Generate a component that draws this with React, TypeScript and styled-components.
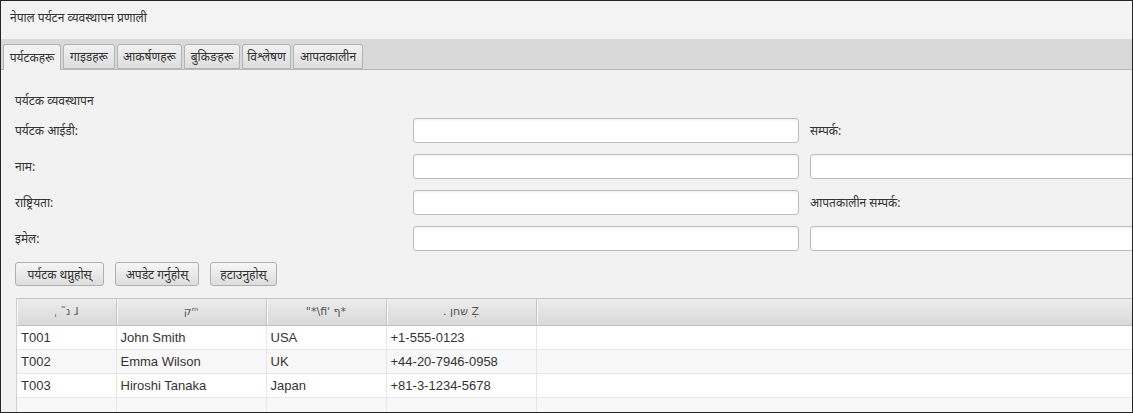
import React from "react";
import styled, { createGlobalStyle } from "styled-components";

const GlobalStyle = createGlobalStyle`
  html, body {
    margin: 0;
    padding: 0;
    background: #ffffff;
  }
  body {
    font-family: "Noto Sans", "DejaVu Sans", sans-serif;
  }
  * { box-sizing: border-box; }
`;

const Frame = styled.div`
  width: 1133px;
  height: 413px;
  border: 1px solid #262626;
  background: #f2f2f2;
  overflow: hidden;
  display: flex;
  flex-direction: column;
  color: #333333;
  font-size: 12px;
`;

const TitleBar = styled.div`
  height: 38px;
  flex: none;
  padding: 8px 0 0 9px;
  background: #f3f3f3;
  font-size: 12px;
  color: #333;
`;

const TabStrip = styled.div`
  height: 31px;
  flex: none;
  display: flex;
  align-items: flex-end;
  gap: 2px;
  padding-left: 2px;
  background: #d9d9d9;
  border-bottom: 1px solid #b9b9b9;
`;

const Tab = styled.div<{ $w: number; $active?: boolean }>`
  width: ${(p) => p.$w}px;
  height: ${(p) => (p.$active ? 26 : 25)}px;
  margin-bottom: ${(p) => (p.$active ? -1 : 0)}px;
  display: flex;
  align-items: center;
  justify-content: center;
  font-size: 12px;
  color: #333;
  border: 1px solid #b3b3b3;
  border-bottom: ${(p) => (p.$active ? "none" : "1px solid #b3b3b3")};
  border-radius: 3px 3px 0 0;
  background: ${(p) =>
    p.$active ? "#f2f2f2" : "linear-gradient(#f1f1f1, #dedede)"};
`;

const Content = styled.div`
  flex: 1;
  padding: 0 0 0 14px;
  display: flex;
  flex-direction: column;
`;

const SectionTitle = styled.div`
  height: 48px;
  padding-top: 22px;
  font-size: 12px;
`;

const FormGrid = styled.div`
  display: grid;
  grid-template-columns: 398px 397px 397px;
  grid-auto-rows: 25px;
  row-gap: 11px;
`;

const Label = styled.div`
  display: flex;
  align-items: center;
  font-size: 12px;
  color: #333;
`;

const Input = styled.input`
  width: 386px;
  height: 25px;
  border: 1px solid #bdbdbd;
  border-radius: 3px;
  background: #ffffff;
  box-shadow: inset 0 1px 2px rgba(0, 0, 0, 0.08);
  outline: none;
  padding: 0 5px;
`;

const ButtonRow = styled.div`
  display: flex;
  gap: 11px;
  margin-top: 11px;
  height: 24px;
`;

const Button = styled.button<{ $w: number }>`
  width: ${(p) => p.$w}px;
  height: 24px;
  border: 1px solid #b0b0b0;
  border-radius: 3px;
  background: linear-gradient(#f6f6f6, #dddddd);
  font-family: inherit;
  font-size: 12px;
  color: #333;
  padding: 0;
`;

const TableWrap = styled.div`
  margin-top: 12px;
  margin-left: 1px;
  border-top: 1px solid #c4c4c4;
  border-left: 1px solid #d0d0d0;
  background: #ffffff;
  flex: 1;
`;

const Table = styled.table`
  border-collapse: collapse;
  table-layout: fixed;
  width: 1400px;
`;

const HeadCell = styled.th<{ $w?: number }>`
  width: ${(p) => (p.$w ? `${p.$w}px` : "auto")};
  height: 26px;
  padding: 0;
  background: linear-gradient(#ececec, #d9d9d9);
  border-right: 1px solid #c6c6c6;
  border-bottom: 1px solid #c0c0c0;
  box-shadow: inset 1px 0 0 #f7f7f7;
  font-family: "DejaVu Sans", sans-serif;
  font-weight: normal;
  font-size: 11px;
  color: #555;
  text-align: center;
`;

const Garbled = styled.span`
  unicode-bidi: bidi-override;
  direction: ltr;
`;

const Row = styled.tr<{ $alt?: boolean }>`
  background: ${(p) => (p.$alt ? "#f8f8f8" : "#ffffff")};
`;

const Cell = styled.td`
  height: 24px;
  padding: 0 0 0 4px;
  border-right: 1px solid #e6e6e6;
  border-bottom: 1px solid #e6e6e6;
  font-family: "Liberation Sans", Arial, sans-serif;
  font-size: 13px;
  color: #333;
  white-space: nowrap;
`;

const tabs = [
  { label: "पर्यटकहरू", w: 58 },
  { label: "गाइडहरू", w: 52 },
  { label: "आकर्षणहरू", w: 65 },
  { label: "बुकिङहरू", w: 56 },
  { label: "विश्लेषण", w: 49 },
  { label: "आपतकालीन", w: 70 },
];

const headers = [
  { text: "ˌ ˜נ ɺ", w: 99 },
  { text: "קᵐ", w: 150 },
  { text: "\"*\\ﬁ̈' ף*", w: 120 },
  { text: ". ןחש Ẓ", w: 150 },
  { text: "", w: 0 },
];

const rows = [
  ["T001", "John Smith", "USA", "+1-555-0123"],
  ["T002", "Emma Wilson", "UK", "+44-20-7946-0958"],
  ["T003", "Hiroshi Tanaka", "Japan", "+81-3-1234-5678"],
  ["", "", "", ""],
];

export default function App() {
  return (
    <>
      <GlobalStyle />
      <Frame>
        <TitleBar>नेपाल पर्यटन व्यवस्थापन प्रणाली</TitleBar>
        <TabStrip>
          {tabs.map((t, i) => (
            <Tab key={t.label} $w={t.w} $active={i === 0}>
              {t.label}
            </Tab>
          ))}
        </TabStrip>
        <Content>
          <SectionTitle>पर्यटक व्यवस्थापन</SectionTitle>
          <FormGrid>
            <Label>पर्यटक आईडी:</Label>
            <Input />
            <Label>सम्पर्क:</Label>
            <Label>नाम:</Label>
            <Input />
            <Input />
            <Label>राष्ट्रियता:</Label>
            <Input />
            <Label>आपतकालीन सम्पर्क:</Label>
            <Label>इमेल:</Label>
            <Input />
            <Input />
          </FormGrid>
          <ButtonRow>
            <Button $w={89}>पर्यटक थप्नुहोस्</Button>
            <Button $w={84}>अपडेट गर्नुहोस्</Button>
            <Button $w={67}>हटाउनुहोस्</Button>
          </ButtonRow>
          <TableWrap>
            <Table>
              <thead>
                <tr>
                  {headers.map((h, i) => (
                    <HeadCell key={i} $w={h.w || undefined}>
                      <Garbled>{h.text}</Garbled>
                    </HeadCell>
                  ))}
                </tr>
              </thead>
              <tbody>
                {rows.map((r, i) => (
                  <Row key={i} $alt={i % 2 === 1}>
                    {r.map((c, j) => (
                      <Cell key={j}>{c}</Cell>
                    ))}
                    <Cell />
                  </Row>
                ))}
              </tbody>
            </Table>
          </TableWrap>
        </Content>
      </Frame>
    </>
  );
}
